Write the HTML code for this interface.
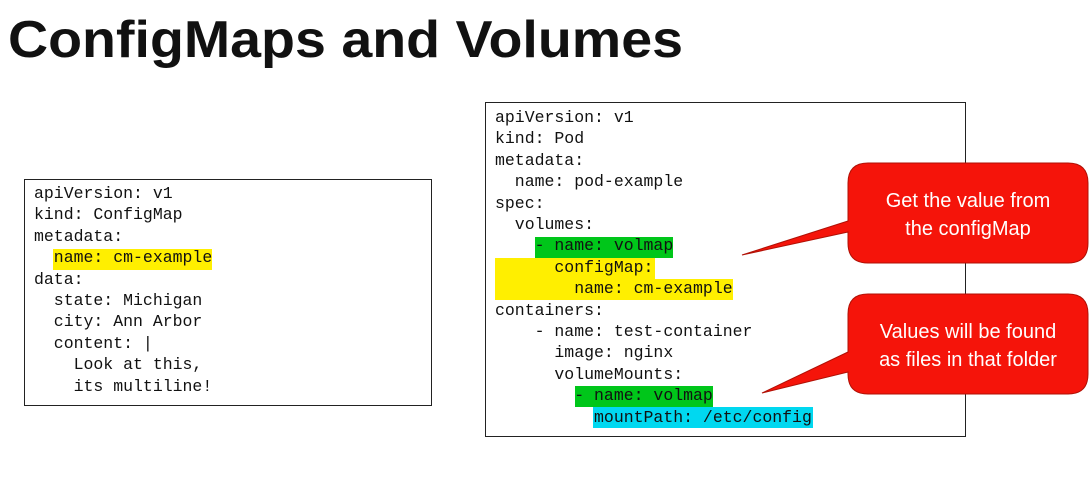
<!DOCTYPE html>
<html><head><meta charset="utf-8"><style>
html,body{margin:0;padding:0;background:#fff;}
body{width:1089px;height:485px;position:relative;overflow:hidden;}
.box{position:absolute;border:1.5px solid #222;background:#fff;box-sizing:border-box;}
.code{position:absolute;font-family:"Liberation Mono",monospace;font-size:16.5px;line-height:21.4px;white-space:pre;color:#111;}
.hl{position:absolute;}
</style></head><body>
<svg style="position:absolute;left:0;top:0" width="1089" height="485">
<text x="8" y="57" font-family="Liberation Sans, sans-serif" font-weight="bold" font-size="52" textLength="675" lengthAdjust="spacingAndGlyphs" fill="#111">ConfigMaps and Volumes</text>
</svg>

<div class="box" style="left:24px;top:179px;width:408px;height:227px;"></div>
<div class="hl" style="left:53px;top:249px;width:159px;height:21px;background:#ffef00;"></div>
<div class="code" style="left:34px;top:183px;">apiVersion: v1
kind: ConfigMap
metadata:
  name: cm-example
data:
  state: Michigan
  city: Ann Arbor
  content: |
    Look at this,
    its multiline!</div>

<div class="box" style="left:485px;top:102px;width:481px;height:335px;"></div>
<div class="hl" style="left:535px;top:237px;width:138px;height:21px;background:#00c61a;"></div>
<div class="hl" style="left:495px;top:258px;width:160px;height:22px;background:#ffef00;"></div>
<div class="hl" style="left:495px;top:279px;width:238px;height:21px;background:#ffef00;"></div>
<div class="hl" style="left:575px;top:386px;width:138px;height:21px;background:#00c61a;"></div>
<div class="hl" style="left:593px;top:407px;width:220px;height:21px;background:#00d8f0;"></div>
<div class="code" style="left:495px;top:107px;">apiVersion: v1
kind: Pod
metadata:
  name: pod-example
spec:
  volumes:
    - name: volmap
      configMap:
        name: cm-example
containers:
    - name: test-container
      image: nginx
      volumeMounts:
        - name: volmap
          mountPath: /etc/config</div>

<svg style="position:absolute;left:0;top:0" width="1089" height="485">
<g fill="#f5140a" stroke="#b01005" stroke-width="1">
<path d="M868,163 H1068 Q1088,163 1088,183 V243 Q1088,263 1068,263 H868 Q848,263 848,243 V232 L742,255 L848,221 V183 Q848,163 868,163 Z"/>
<path d="M868,294 H1068 Q1088,294 1088,314 V374 Q1088,394 1068,394 H868 Q848,394 848,374 V372 L762,393 L848,352 V314 Q848,294 868,294 Z"/>
</g>
<g font-family="Liberation Sans, sans-serif" font-size="20" fill="#fff" text-anchor="middle">
<text x="968" y="207">Get the value from</text>
<text x="968" y="235">the configMap</text>
<text x="968" y="338">Values will be found</text>
<text x="968" y="366">as files in that folder</text>
</g>
</svg>
</body></html>
